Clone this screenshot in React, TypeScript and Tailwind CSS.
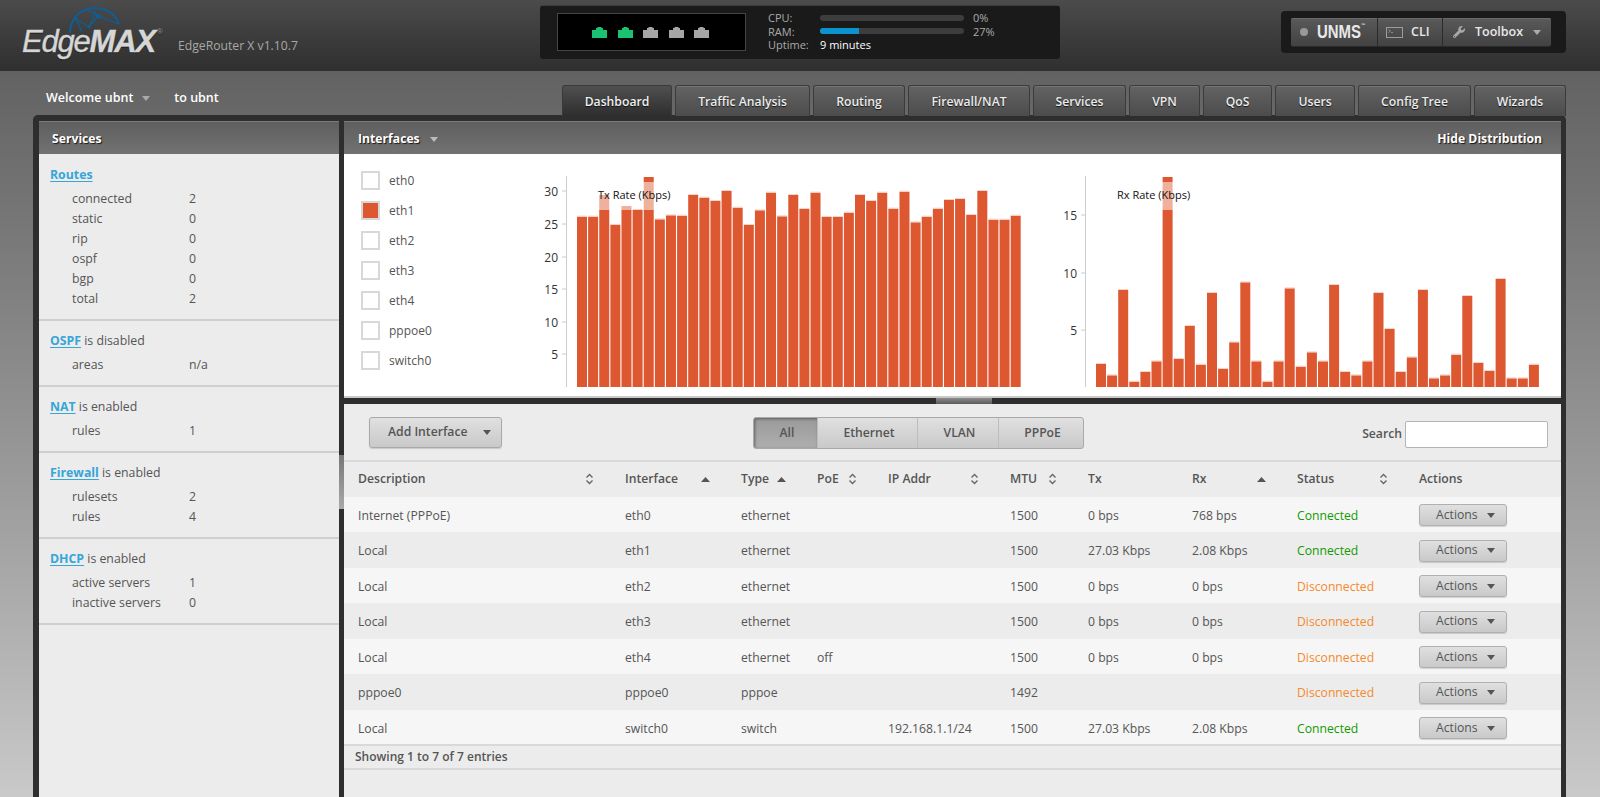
import React from "react";
import { FaWrench } from "react-icons/fa";

const shadow = "[text-shadow:0_1px_1px_rgba(0,0,0,0.75)]";

function Caret({ className = "" }: { className?: string }) {
  return (
    <svg width="8" height="5" viewBox="0 0 8 5" className={className}>
      <path d="M0 0H8L4 5Z" fill="currentColor" />
    </svg>
  );
}

function Port({ on }: { on: boolean }) {
  return (
    <svg width="15" height="11" viewBox="0 0 15 11">
      <path d="M0 3H4V1H5.5V0H9.5V1H11V3H15V11H0Z" fill={on ? "#1bc272" : "#a6a6a6"} />
    </svg>
  );
}

function TerminalGlyph() {
  return (
    <svg width="17" height="11" viewBox="0 0 17 11" fill="none">
      <rect x="0.5" y="0.5" width="16" height="10" stroke="#9c9c9c" />
      <path d="M2.5 2.5L4.5 4L2.5 5.5M5 5.5H7" stroke="#9c9c9c" strokeWidth="0.8" />
    </svg>
  );
}

function Logo() {
  return (
    <div className="relative w-[134px] h-[71px]">
      <svg width="54" height="28" viewBox="0 0 54 28" fill="none" className="absolute left-[45px] top-[6px]">
        <path d="M3 27C3 12 14 2 28 2C40 2 48 8 52 18" stroke="#0d5f96" strokeWidth="2" />
        <path d="M9 13L22 21L31 10L52 18M22 21L29 4M31 10L20 3M9 13L15 26" stroke="#0d5f96" strokeWidth="1.2" />
        <circle cx="22" cy="21" r="1.5" fill="#0d5f96" />
        <circle cx="31" cy="10" r="2.5" fill="#0d5f96" />
        <circle cx="9" cy="13" r="1.5" fill="#0d5f96" />
      </svg>
      <div className="absolute left-0 top-[24px] flex items-start whitespace-nowrap italic [font-family:'Liberation_Sans',sans-serif] text-[31px] leading-[36px] tracking-[-1.2px] text-[#d6d6d6] [-webkit-text-stroke:0.4px_#d6d6d6] [text-shadow:0_1px_1px_rgba(0,0,0,0.6)]">
        <span>Edge</span>
        <span className="font-bold">MAX</span>
        <span className="not-italic text-[8px] leading-[10px] mt-[3px] ml-[2px] tracking-normal text-[#999] [-webkit-text-stroke:0]">®</span>
      </div>
    </div>
  );
}

function StatusBox() {
  return (
    <div className="mt-[5px] ml-[241px] w-[520px] h-[54px] rounded-[3px] bg-[#1a1a1a] border-t border-[#3d3d3d] flex pl-[17px] pt-[7px]">
      <div className="w-[189px] h-[38px] bg-black border border-[#444] flex items-center justify-center gap-[10.5px] pt-[1px] pr-[2px]">
        <Port on />
        <Port on />
        <Port on={false} />
        <Port on={false} />
        <Port on={false} />
      </div>
      <div className="ml-[22px] -mt-[2px] text-[11px] leading-[13.5px] text-[#aaaaaa]">
        <div className="flex items-center h-[13.5px]">
          <span className="w-[52px]">CPU:</span>
          <span className="w-[144px] h-[6px] rounded-[3px] bg-[#3d3d3d]" />
          <span className="ml-[9px]">0%</span>
        </div>
        <div className="flex items-center h-[13.5px]">
          <span className="w-[52px]">RAM:</span>
          <span className="w-[144px] h-[6px] rounded-[3px] bg-[#3d3d3d] overflow-hidden">
            <span className="block w-[39px] h-full bg-[#0a93cf]" />
          </span>
          <span className="ml-[9px]">27%</span>
        </div>
        <div className="flex items-center h-[13.5px]">
          <span className="w-[52px]">Uptime:</span>
          <span className="text-white">9 minutes</span>
        </div>
      </div>
    </div>
  );
}

function ToolBox() {
  const btn =
    "h-[29px] flex items-center bg-gradient-to-b from-[#5a5a5a] to-[#424242] border-b border-[#2b2b2b] shadow-[inset_0_1px_0_#6a6a6a] text-[#e8e8e8] font-semibold text-[12.5px]";
  return (
    <div className="mt-[11px] ml-auto mr-[34px] w-[285px] h-[42px] rounded-[4px] bg-[#1a1a1a] flex items-center pl-[10px] pt-[1px]">
      <div className={`${btn} w-[87px] rounded-l-[2px] pl-[9px] border-r border-r-[#2b2b2b]`}>
        <span className="w-[8px] h-[8px] rounded-full bg-[#999]" />
        <span className="ml-[9px] inline-block origin-left scale-x-[0.83] [font-family:'Liberation_Sans',sans-serif] font-bold text-[18px] leading-none whitespace-nowrap">
          UNMS
          <span className="align-top text-[5px]">™</span>
        </span>
      </div>
      <div className={`${btn} w-[65px] pl-[8px] border-r border-r-[#2b2b2b]`}>
        <TerminalGlyph />
        <span className="ml-[8px]">CLI</span>
      </div>
      <div className={`${btn} w-[108px] rounded-r-[2px] pl-[10px]`}>
        <FaWrench className="text-[#a8a8a8] w-[12px] h-[12px]" />
        <span className="ml-[10px]">Toolbox</span>
        <Caret className="ml-[10px] text-[#aaa]" />
      </div>
    </div>
  );
}

const tabs: [string, string][] = [
  ["Dashboard", "w-[110px]"],
  ["Traffic Analysis", "w-[135px]"],
  ["Routing", "w-[92px]"],
  ["Firewall/NAT", "w-[122px]"],
  ["Services", "w-[93px]"],
  ["VPN", "w-[71px]"],
  ["QoS", "w-[69px]"],
  ["Users", "w-[80px]"],
  ["Config Tree", "w-[113px]"],
  ["Wizards", "w-[92px]"],
];

function Tabs() {
  return (
    <div className="flex gap-[3px] mr-[34px] self-end -mb-[1px] relative z-10">
      {tabs.map(([t, w], i) => (
        <div
          key={t}
          className={`${w} h-[31px] rounded-t-[3px] border border-b-0 flex items-center justify-center text-[12.2px] font-semibold pt-[3px] ${shadow} ${
            i === 0
              ? "border-[#3a3a3a] bg-gradient-to-b from-[#505050] to-[#2e2e2e] text-[#f0f0f0]"
              : "border-[#3b3b3b] bg-gradient-to-b from-[#636363] to-[#4c4c4c] text-[#ececec] shadow-[inset_0_1px_0_#757575]"
            }`}
        >
          {t}
        </div>
      ))}
    </div>
  );
}

type Section = { head: string; tail?: string; rows: [string, string][] };

const sections: Section[] = [
  {
    head: "Routes",
    rows: [
      ["connected", "2"],
      ["static", "0"],
      ["rip", "0"],
      ["ospf", "0"],
      ["bgp", "0"],
      ["total", "2"],
    ],
  },
  { head: "OSPF", tail: " is disabled", rows: [["areas", "n/a"]] },
  { head: "NAT", tail: " is enabled", rows: [["rules", "1"]] },
  {
    head: "Firewall",
    tail: " is enabled",
    rows: [
      ["rulesets", "2"],
      ["rules", "4"],
    ],
  },
  {
    head: "DHCP",
    tail: " is enabled",
    rows: [
      ["active servers", "1"],
      ["inactive servers", "0"],
    ],
  },
];

function PaneHead({ children }: { children: React.ReactNode }) {
  return (
    <div className="h-[33px] shrink-0 flex items-center justify-between pl-[14px] pr-[19px] pt-[3px] bg-gradient-to-b from-[#5f5f5f] to-[#727272] border-t border-[#7a7a7a] text-white text-[12.2px] font-bold [text-shadow:1px_1px_1px_rgba(0,0,0,0.8)]">
      {children}
    </div>
  );
}

function Sidebar() {
  return (
    <aside className="w-[300px] shrink-0 bg-[#ececec] flex flex-col">
      <PaneHead>
        <span className="-ml-[1px]">Services</span>
      </PaneHead>
      <div className="pt-[1px] text-[12.3px] text-[#555]">
        {sections.map((s) => (
          <div key={s.head} className="pt-[10px] pb-[10px] pl-[11px] border-b-2 border-[#cfcfcf]">
            <div className="h-[20px] leading-[20px]">
              <a className="font-bold text-[#36a5d8] underline underline-offset-2">{s.head}</a>
              {s.tail}
            </div>
            <div className="mt-[4px] pl-[22px]">
              {s.rows.map(([k, v]) => (
                <div key={k} className="h-[20px] leading-[20px] flex">
                  <span className="w-[117px]">{k}</span>
                  <span>{v}</span>
                </div>
              ))}
            </div>
          </div>
        ))}
      </div>
    </aside>
  );
}

const txTops = [200, 200, 180, 225, 180, 180, 180, 208, 196, 197, 135, 143, 153, 123, 173, 225, 181, 128, 199, 135, 177, 128, 201, 201, 188, 135, 153, 128, 176, 125, 217, 200, 176, 150, 147, 195, 123, 209, 209, 197];
const rxTops = [642, 676, 420, 695, 666, 634, 180, 627, 528, 644, 429, 657, 577, 397, 634, 695, 634, 415, 650, 607, 634, 405, 666, 676, 634, 429, 537, 666, 622, 420, 685, 676, 614, 438, 639, 663, 387, 685, 685, 644];

const DARK = "#dd5730";
const LIGHT = "#efb09c";

function Chart({
  width,
  tops,
  ticks,
  axisX,
  firstX,
  pitch,
  title,
  titleX,
  overlays,
}: {
  width: number;
  tops: number[];
  ticks: [string, number][];
  axisX: number;
  firstX: number;
  pitch: number;
  title: string;
  titleX: number;
  overlays: { i: number; top: number; bottom: number; dark?: number }[];
}) {
  const y = (zy: number) => zy / 3 + 150 - 154;
  const base = 233;
  return (
    <svg width={width} height={244} viewBox={`0 0 ${width} 244`} className="block shrink-0">
      <line x1={axisX + 0.5} x2={axisX + 0.5} y1={22} y2={base} stroke="#cccccc" />
      {ticks.map(([label, ty]) => (
        <g key={label}>
          <line x1={axisX - 4} x2={axisX} y1={ty} y2={ty} stroke="#cccccc" />
          <text x={axisX - 8} y={ty + 4.5} textAnchor="end" fontSize="12" fill="#333" fontFamily="'Open Sans',sans-serif">
            {label}
          </text>
        </g>
      ))}
      {tops.map((t, i) => {
        const top = y(t);
        const x = firstX + i * pitch;
        return (
          <g key={i}>
            <rect x={x} y={top} width={10} height={base - top} fill={DARK} />
            <rect x={x} y={top - 1} width={10} height={1} fill="#f6d3c7" />
          </g>
        );
      })}
      {overlays.map((o) => {
        const x = firstX + o.i * pitch;
        return (
          <g key={o.i}>
            <rect x={x} y={y(o.top)} width={10} height={y(o.bottom) - y(o.top)} fill={LIGHT} />
            {o.dark !== undefined && <rect x={x} y={y(o.dark)} width={10} height={y(o.top) - y(o.dark)} fill={DARK} />}
          </g>
        );
      })}
      <text x={titleX} y={45} fontSize="11" fill="#111" fontFamily="'Open Sans',sans-serif">
        {title}
      </text>
    </svg>
  );
}

function Distribution() {
  return (
    <div className="h-[244px] shrink-0 bg-white border-b-2 border-[#c9c9c9] flex">
      <div className="w-[182px] shrink-0 pl-[17px] pt-[17px] flex flex-col gap-[10.5px]">
        {["eth0", "eth1", "eth2", "eth3", "eth4", "pppoe0", "switch0"].map((n) => (
          <div key={n} className="flex items-center h-[19.5px] text-[12px] text-[#555]">
            <span className={`w-[19px] h-[19px] border-2 border-[#d8d8d8] ${n === "eth1" ? "bg-[#dd5730]" : "bg-white"}`} />
            <span className="ml-[9px]">{n}</span>
          </div>
        ))}
      </div>
      <Chart
        width={533}
        tops={txTops}
        axisX={40}
        firstX={51}
        pitch={11.12}
        title="Tx Rate (Kbps)"
        titleX={72}
        ticks={[
          ["30", 37],
          ["25", 70],
          ["20", 103],
          ["15", 135],
          ["10", 168],
          ["5", 200],
        ]}
        overlays={[
          { i: 2, top: 135, bottom: 180 },
          { i: 4, top: 168, bottom: 180 },
          { i: 6, top: 96, bottom: 180, dark: 81 },
        ]}
      />
      <Chart
        width={502}
        tops={rxTops}
        axisX={26}
        firstX={37}
        pitch={11.1}
        title="Rx Rate (Kbps)"
        titleX={58}
        ticks={[
          ["15", 61],
          ["10", 119],
          ["5", 176],
        ]}
        overlays={[{ i: 6, top: 96, bottom: 180, dark: 81 }]}
      />
    </div>
  );
}

function Toolbar() {
  const seg = "h-full flex items-center justify-center border-r border-[#bdbdbd] pl-[3px]";
  return (
    <div className="h-[58px] shrink-0 flex items-start relative border-b-2 border-[#d9d9d9]">
      <button className="mt-[13px] ml-[25px] w-[133px] h-[31px] rounded-[3px] border border-[#a9a9a9] bg-gradient-to-b from-[#e0e0e0] to-[#c9c9c9] shadow-[0_1px_1px_rgba(0,0,0,0.15)] flex items-center pl-[18px] text-[12.2px] font-semibold text-[#555]">
        Add Interface
        <Caret className="ml-[15px] text-[#555]" />
      </button>
      <div className="mt-[13px] ml-[251px] w-[331px] h-[32px] rounded-[3px] border border-[#a9a9a9] bg-gradient-to-b from-[#e0e0e0] to-[#c9c9c9] flex overflow-hidden text-[12.2px] font-semibold text-[#555]">
        <div className={`${seg} w-[64px] bg-gradient-to-b from-[#9a9a9a] to-[#aeaeae] shadow-[inset_1px_1px_3px_rgba(0,0,0,0.4)] border-[#8a8a8a]`}>
          All
        </div>
        <div className={`${seg} w-[100px]`}>Ethernet</div>
        <div className={`${seg} w-[81px]`}>VLAN</div>
        <div className="h-full flex-1 flex items-center justify-center pl-[3px]">PPPoE</div>
      </div>
      <div className="ml-auto mr-[13px] mt-[17px] flex items-center text-[12.2px] font-semibold text-[#555]">
        <span>Search</span>
        <input className="ml-[3px] w-[143px] h-[27px] rounded-[2px] border border-[#b5b5b5] bg-white" aria-label="Search" />
      </div>
    </div>
  );
}

function SortBoth() {
  return (
    <svg width="9" height="12" viewBox="0 0 9 12" fill="none" stroke="#666" strokeWidth="1.4">
      <path d="M1.5 4.5L4.5 1.5L7.5 4.5M1.5 7.5L4.5 10.5L7.5 7.5" />
    </svg>
  );
}

function SortUp() {
  return (
    <svg width="9" height="5" viewBox="0 0 9 5">
      <path d="M0 5H9L4.5 0Z" fill="#555" />
    </svg>
  );
}

const cols: [string, string, "both" | "up" | null][] = [
  ["Description", "w-[267px]", "both"],
  ["Interface", "w-[116px]", "up"],
  ["Type", "w-[76px]", "up"],
  ["PoE", "w-[71px]", "both"],
  ["IP Addr", "w-[122px]", "both"],
  ["MTU", "w-[78px]", "both"],
  ["Tx", "w-[104px]", null],
  ["Rx", "w-[105px]", "up"],
  ["Status", "w-[122px]", "both"],
  ["Actions", "w-[156px]", null],
];

const rows: string[][] = [
  ["Internet (PPPoE)", "eth0", "ethernet", "", "", "1500", "0 bps", "768 bps", "Connected"],
  ["Local", "eth1", "ethernet", "", "", "1500", "27.03 Kbps", "2.08 Kbps", "Connected"],
  ["Local", "eth2", "ethernet", "", "", "1500", "0 bps", "0 bps", "Disconnected"],
  ["Local", "eth3", "ethernet", "", "", "1500", "0 bps", "0 bps", "Disconnected"],
  ["Local", "eth4", "ethernet", "off", "", "1500", "0 bps", "0 bps", "Disconnected"],
  ["pppoe0", "pppoe0", "pppoe", "", "", "1492", "", "", "Disconnected"],
  ["Local", "switch0", "switch", "", "192.168.1.1/24", "1500", "27.03 Kbps", "2.08 Kbps", "Connected"],
];

function InterfacesTable() {
  return (
    <table className="w-full table-fixed border-collapse text-[12.2px] text-[#555]">
      <colgroup>
        {cols.map(([c, w]) => (
          <col key={c} className={w} />
        ))}
      </colgroup>
      <thead>
        <tr className="h-[35px] bg-[#ececec]">
          {cols.map(([c, , sort]) => (
            <th key={c} className="p-0 pl-[14px] pr-[17px] font-semibold text-left">
              <div className="flex items-center justify-between">
                <span>{c}</span>
                {sort === "both" && <SortBoth />}
                {sort === "up" && <SortUp />}
              </div>
            </th>
          ))}
        </tr>
      </thead>
      <tbody>
        {rows.map((r, i) => (
          <tr key={i} className={`${i % 2 === 0 ? "bg-[#f6f6f6] h-[35px]" : "bg-[#ececec] h-[36px]"}`}>
            {r.map((v, j) => (
              <td
                key={j}
                className={`p-0 pl-[14px] pt-[3px] whitespace-nowrap ${
                  v === "Connected" ? "text-[#149a00]" : v === "Disconnected" ? "text-[#f58a2c]" : ""
                }`}
              >
                {v}
              </td>
            ))}
            <td className="p-0 pl-[14px] pt-[1px]">
              <button className="w-[88px] h-[22px] rounded-[3px] border border-[#b0b0b0] bg-gradient-to-b from-[#e0e0e0] to-[#c9c9c9] shadow-[0_1px_1px_rgba(0,0,0,0.15)] flex items-center pl-[16px] text-[12.2px] text-[#555]">
                Actions
                <Caret className="ml-[9px] text-[#555]" />
              </button>
            </td>
          </tr>
        ))}
      </tbody>
    </table>
  );
}

export default function App() {
  return (
    <div className="h-[797px] overflow-hidden flex flex-col bg-gradient-to-b from-[#595959] to-[#c9c9c9] [font-family:'Open_Sans',sans-serif]">
      <header className="h-[71px] shrink-0 flex bg-gradient-to-b from-[#4b4b4b] to-[#2f2f2f]">
        <div className="ml-[22px] shrink-0">
          <Logo />
        </div>
        <div className="ml-[22px] pt-[37px] text-[12.2px] leading-[18px] text-[#a8a8a8] whitespace-nowrap w-[121px] shrink-0">
          EdgeRouter X v1.10.7
        </div>
        <StatusBox />
        <ToolBox />
      </header>
      <div className="h-[44px] shrink-0 flex justify-between items-center">
        <div className="pl-[46px] pt-[11px] flex items-center text-[12.5px] font-semibold text-white">
          <span>Welcome ubnt</span>
          <Caret className="ml-[9px] text-[#aaa]" />
          <span className="ml-[24px]">to ubnt</span>
        </div>
        <Tabs />
      </div>
      <main className="flex-1 ml-[33px] mr-[34px] rounded-t-[5px] bg-[#2e2e2e] pt-[6px] pl-[6px] pr-[5px] flex gap-[5px] min-h-0 relative">
        <Sidebar />
        <section className="flex-1 min-w-0 flex flex-col bg-[#ececec] relative">
          <PaneHead>
            <span className="flex items-center">
              Interfaces
              <Caret className="ml-[10px] text-[#bbb]" />
            </span>
            <span>Hide Distribution</span>
          </PaneHead>
          <Distribution />
          <div className="h-[6px] shrink-0 bg-[#2e2e2e] flex justify-center pl-[23px]">
            <div className="w-[56px] h-full bg-gradient-to-b from-[#8c8c8c] to-[#5a5a5a]" />
          </div>
          <Toolbar />
          <InterfacesTable />
          <div className="h-[22px] flex items-center pl-[11px] text-[12px] font-semibold text-[#555] border-t-2 border-b-2 border-[#d9d9d9] box-content -mt-[1px]">
            Showing 1 to 7 of 7 entries
          </div>
        </section>
        <div className="absolute left-[306px] top-[340px] w-[5px] h-[54px] bg-gradient-to-b from-[#777] to-[#aaa]" />
      </main>
    </div>
  );
}
